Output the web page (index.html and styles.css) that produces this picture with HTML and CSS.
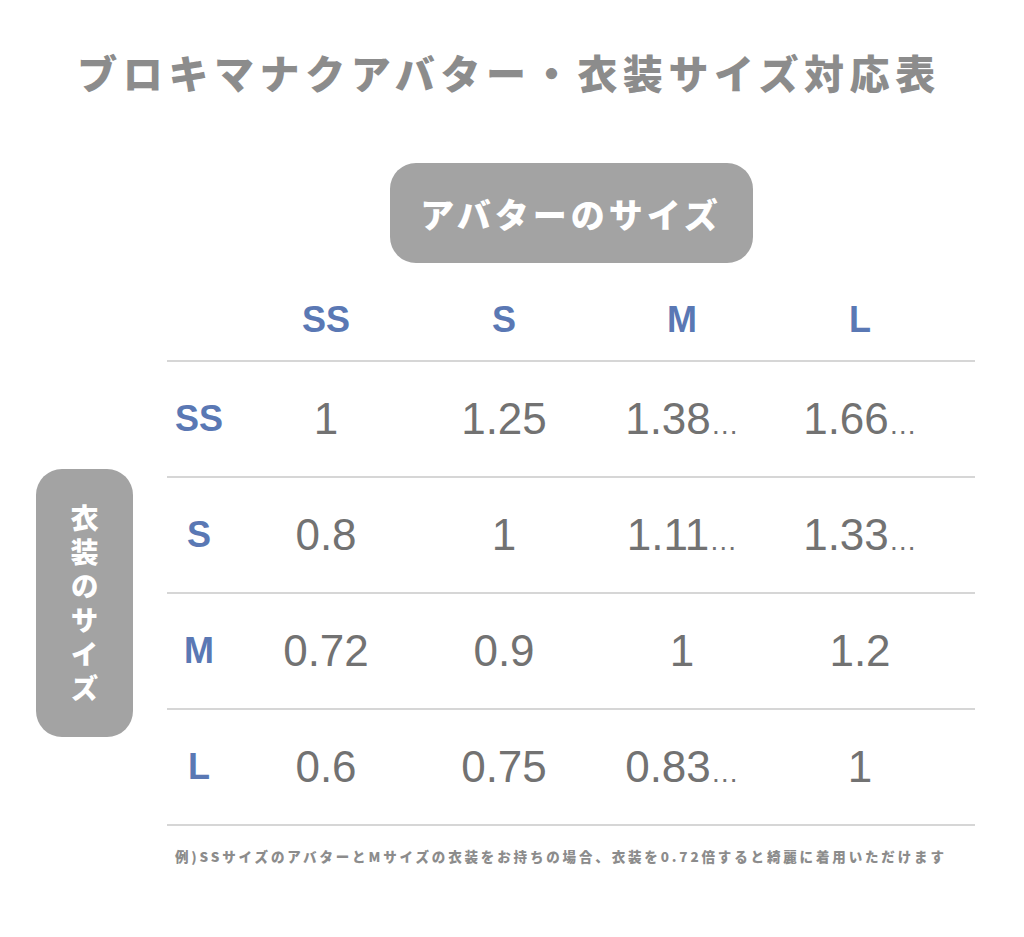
FILE: index.html
```html
<!DOCTYPE html>
<html lang="ja">
<head>
<meta charset="utf-8">
<title>ブロキマナクアバター・衣装サイズ対応表</title>
<link rel="stylesheet" href="styles.css">
</head>
<body>
<div class="page">
  <h1 class="title">ブロキマナクアバター・衣装サイズ対応表</h1>
  <div class="board">
    <div class="side">
      <div class="side-pill"><span class="side-text">衣装のサイズ</span></div>
    </div>
    <div class="content">
      <div class="top-pill">アバターのサイズ</div>
      <div class="table">
        <div class="row head">
          <div class="cell"></div>
          <div class="cell hd">SS</div>
          <div class="cell hd">S</div>
          <div class="cell hd">M</div>
          <div class="cell hd">L</div>
        </div>
        <div class="row">
          <div class="cell lbl">SS</div>
          <div class="cell num">1</div>
          <div class="cell num">1.25</div>
          <div class="cell num">1.38<span class="ell">…</span></div>
          <div class="cell num">1.66<span class="ell">…</span></div>
        </div>
        <div class="row">
          <div class="cell lbl">S</div>
          <div class="cell num">0.8</div>
          <div class="cell num">1</div>
          <div class="cell num">1.11<span class="ell">…</span></div>
          <div class="cell num">1.33<span class="ell">…</span></div>
        </div>
        <div class="row">
          <div class="cell lbl">M</div>
          <div class="cell num">0.72</div>
          <div class="cell num">0.9</div>
          <div class="cell num">1</div>
          <div class="cell num">1.2</div>
        </div>
        <div class="row">
          <div class="cell lbl">L</div>
          <div class="cell num">0.6</div>
          <div class="cell num">0.75</div>
          <div class="cell num">0.83<span class="ell">…</span></div>
          <div class="cell num">1</div>
        </div>
      </div>
      <p class="note">例)SSサイズのアバターとMサイズの衣装をお持ちの場合、衣装を0.72倍すると綺麗に着用いただけます</p>
    </div>
  </div>
</div>
</body>
</html>
```

FILE: styles.css
```css
html, body {
  margin: 0;
  padding: 0;
  background: #ffffff;
}

body {
  font-family: "Noto Sans CJK JP", "Liberation Sans", sans-serif;
  width: 1024px;
  height: 937px;
  overflow: hidden;
}

.page {
  display: flex;
  flex-direction: column;
}

.title {
  margin: 0;
  padding-top: 48px;
  height: 48px;
  line-height: 48px;
  text-align: center;
  font-size: 40px;
  font-weight: 900;
  letter-spacing: 5.6px;
  color: #8c8c8c;
  padding-right: 6px;
}

.board {
  display: flex;
  margin-top: 67px;
  margin-left: 36px;
}

.side {
  width: 97px;
  padding-top: 306px;
}

.side-pill {
  width: 97px;
  height: 268px;
  border-radius: 26px;
  background: #a3a3a3;
  display: flex;
  justify-content: center;
  align-items: center;
}

.side-text {
  writing-mode: vertical-rl;
  color: #ffffff;
  font-size: 28px;
  font-weight: 900;
  letter-spacing: 6px;
  line-height: 1;
  margin-top: 6px;
}

.content {
  margin-left: 34px;
  width: 808px;
  display: flex;
  flex-direction: column;
}

.top-pill {
  align-self: center;
  width: 363px;
  height: 100px;
  border-radius: 26px;
  background: #a3a3a3;
  color: #ffffff;
  font-size: 34px;
  font-weight: 900;
  letter-spacing: 4px;
  display: flex;
  justify-content: center;
  align-items: center;
}

.table {
  margin-top: 17px;
  display: flex;
  flex-direction: column;
}

.row {
  display: grid;
  grid-template-columns: 70px repeat(4, 178px) 1fr;
  height: 114px;
  border-bottom: 2px solid #d6d6d6;
  align-items: center;
}

.row.head {
  height: 80px;
}

.cell {
  text-align: center;
}

.lbl {
  padding-right: 6px;
}

.hd, .lbl {
  font-family: "Liberation Sans Narrow", "Liberation Sans", sans-serif;
  font-weight: 700;
  font-size: 36px;
  color: #5a78b4;
}

.num {
  font-family: "Liberation Sans", "Noto Sans CJK JP", sans-serif;
  font-size: 44px;
  color: #727272;
}

.ell {
  font-size: 28px;
  letter-spacing: 0;
}

.note {
  margin: 20px 0 0 8px;
  font-size: 13.5px;
  font-weight: 900;
  letter-spacing: 2.85px;
  color: #8c8c8c;
  white-space: nowrap;
}
```
